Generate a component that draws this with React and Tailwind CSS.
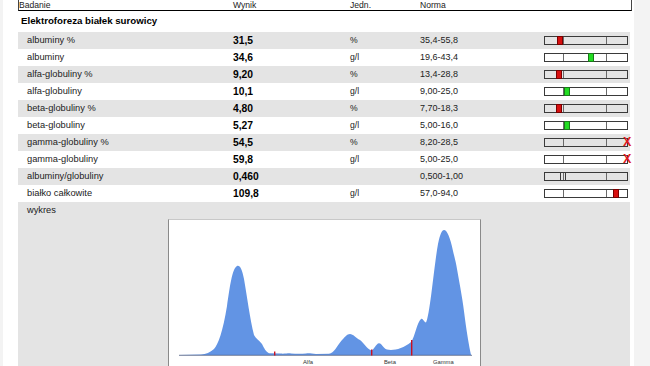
import React from "react";

const rows = [
  { n: "albuminy %", w: "31,5", u: "%", r: "35,4-55,8", m: "red", x: 13 },
  { n: "albuminy", w: "34,6", u: "g/l", r: "19,6-43,4", m: "green", x: 44 },
  { n: "alfa-globuliny %", w: "9,20", u: "%", r: "13,4-28,8", m: "red", x: 12 },
  { n: "alfa-globuliny", w: "10,1", u: "g/l", r: "9,00-25,0", m: "green", x: 20 },
  { n: "beta-globuliny %", w: "4,80", u: "%", r: "7,70-18,3", m: "red", x: 12 },
  { n: "beta-globuliny", w: "5,27", u: "g/l", r: "5,00-16,0", m: "green", x: 20 },
  { n: "gamma-globuliny %", w: "54,5", u: "%", r: "8,20-28,5", m: "x", x: 79 },
  { n: "gamma-globuliny", w: "59,8", u: "g/l", r: "5,00-25,0", m: "x", x: 79 },
  { n: "albuminy/globuliny", w: "0,460", u: "", r: "0,500-1,00", m: "none", x: 16 },
  { n: "białko całkowite", w: "109,8", u: "g/l", r: "57,0-94,0", m: "red", x: 69 },
];

function Bar({ m, x }) {
  return (
    <div className="relative h-[9px] w-[84px] border border-[#3a3a3a] flex">
      <div className="w-[19px] h-full border-r border-[#6a6a6a]" />
      <div className="w-[43px] h-full border-r border-[#6a6a6a]" />
      <div className="flex-1 h-full" />
      {m === "red" && (
        <div
          className="absolute top-[-1px] h-[9px] w-[6px] bg-[#d80f0f] border border-[#7a0000]"
          style={{ left: x - 1 }}
        />
      )}
      {m === "green" && (
        <div
          className="absolute top-[-1px] h-[9px] w-[6px] bg-[#22dd22] border border-[#1a7a1a]"
          style={{ left: x - 1 }}
        />
      )}
      {m === "none" && (
        <div
          className="absolute top-[-1px] h-[9px] w-[6px] border border-[#3a3a3a]"
          style={{ left: x - 1 }}
        />
      )}
      {m === "x" && (
        <div
          className="absolute top-[-4px] text-[12.5px] leading-[14px] font-bold text-[#e01b1b]"
          style={{ left: x - 1 }}
        >
          X
        </div>
      )}
    </div>
  );
}

function Chart() {
  const d =
    "M178,354 L200,353.6 C205,353.3 209,351.5 213,348 C217,344 222,330 226,305 C229,285 231,268 236,265 C239,264 241,268 243,278 C246,295 249,318 253,334 C255,338 258,339 261,343 C263,347 265,351 268,352.2 L280,352.6 C285,352.8 287,352 290,352.4 C295,352.9 300,353.1 305,352.4 C308,351.9 311,352.6 315,352.9 L328,352.8 C333,352.2 336,345 341,339 C344,336 346,333 349,333 C352,333 355,337 359,339 C363,342 366,348 370,349.3 C373,349.5 375,342.5 378,342.3 C381,342.3 382,347.5 386,348.5 C392,349.8 402,348 410,341 C414,336 416,321 420,318 C422,317 423,321.5 425,321.5 C429,314 433,265 437,243 C439,233 441,229 443,229 C446,229 449,236 452,250 C454,258 455,262 456,268 C459,285 462,300 464,318 C466,333 468,345 470,354 Z";
  return (
    <svg width="313" height="147" viewBox="168 219 313 147" className="block">
      <path d={d} fill="#6294e4" />
      <line x1="178" y1="354.3" x2="471" y2="354.3" stroke="#4a5a80" strokeWidth="0.8" />
      <rect x="273" y="350.5" width="1.4" height="4" fill="#cc1020" />
      <rect x="370" y="348.5" width="1.4" height="6" fill="#cc1020" />
      <rect x="410" y="339" width="1.4" height="15.5" fill="#cc1020" />
      <text x="302" y="363" fontSize="5.8" fill="#333" fontFamily="Liberation Sans, Arial, sans-serif">Alfa</text>
      <text x="383" y="363" fontSize="5.8" fill="#333" fontFamily="Liberation Sans, Arial, sans-serif">Beta</text>
      <text x="432" y="363" fontSize="5.8" fill="#333" fontFamily="Liberation Sans, Arial, sans-serif">Gamma</text>
    </svg>
  );
}

export default function App() {
  return (
    <div className="w-[650px] h-[366px] overflow-hidden bg-[#f3f3f3] pl-[3px] font-['Liberation_Sans',Arial,sans-serif] text-[#222]">
      <div className="w-[631px] h-full bg-white pl-[15px]">
        {/* header */}
        <div className="w-[614px] h-[11px] border-x border-[#444] border-b border-b-black grid grid-cols-[214px_117px_70px_1fr] items-end text-[8.6px] leading-[10px]">
          <div>Badanie</div>
          <div>Wynik</div>
          <div>Jedn.</div>
          <div>Norma</div>
        </div>
        {/* section title */}
        <div className="h-[21px] flex items-center pl-[3px] text-[9.7px] font-bold text-black">
          Elektroforeza białek surowicy
        </div>
        {/* rows */}
        <div className="w-[612px] flex flex-col">
          {rows.map((r, i) => (
            <div
              key={r.n}
              className={
                "h-[17px] grid grid-cols-[215px_117px_70px_124px_84px_1fr] items-center " +
                (i % 2 === 0 ? "bg-[#e4e4e4]" : "bg-white")
              }
            >
              <div className="pl-[9px] text-[9.3px]">{r.n}</div>
              <div className="text-[10.3px] font-bold text-black">{r.w}</div>
              <div className="text-[8.6px]">{r.u}</div>
              <div className="text-[9px]">{r.r}</div>
              <Bar m={r.m} x={r.x} />
              <div />
            </div>
          ))}
          {/* wykres */}
          <div className="bg-[#e4e4e4] h-[200px] pt-[2px]">
            <div className="pl-[9px] text-[9.3px] leading-[12px]">wykres</div>
            <div className="ml-[150px] mt-[3px] w-[313px] h-[160px] bg-white border-x border-x-[#8a8a8a] border-t border-t-[#c8c8c8]">
              <Chart />
            </div>
          </div>
        </div>
      </div>
    </div>
  );
}
